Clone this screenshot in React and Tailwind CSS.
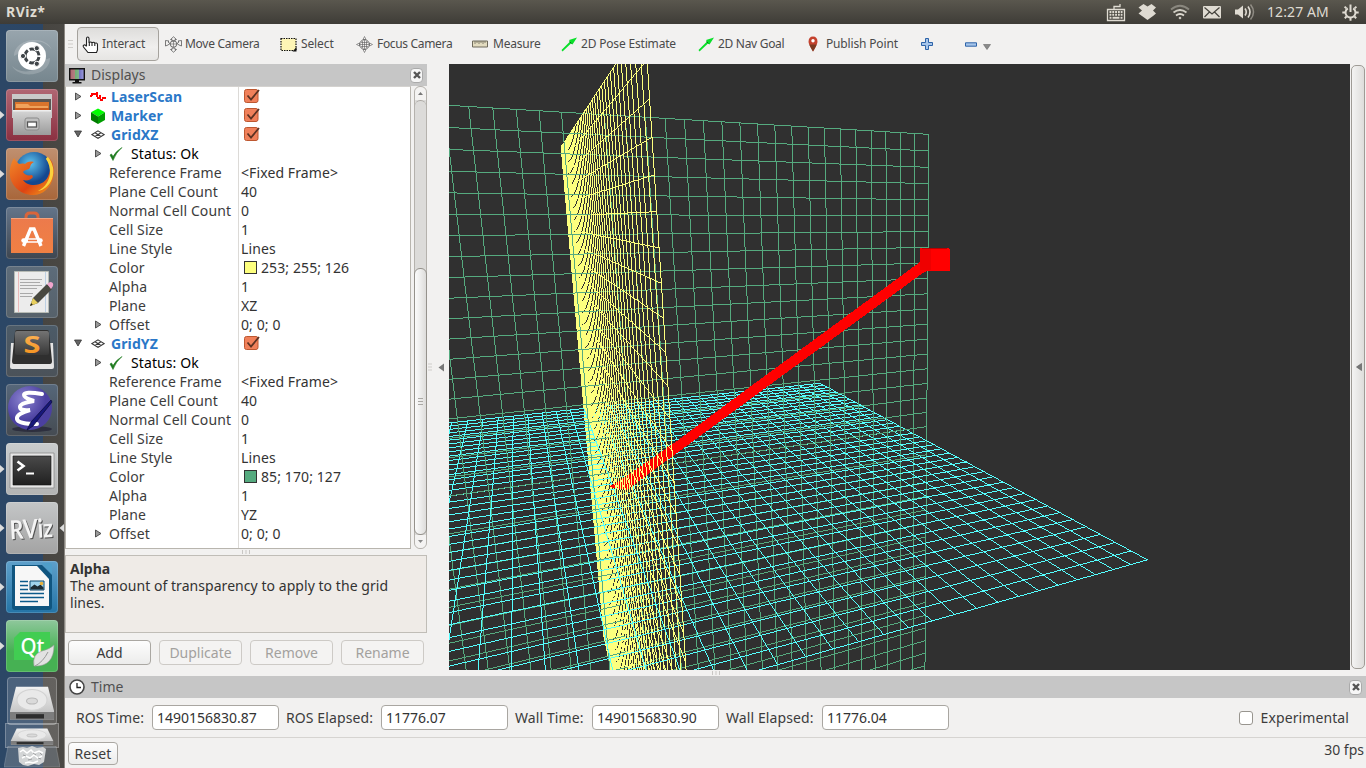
import React from "react";

/* ---------- 3D scene ---------- */
const OX = 449, OY = 64, W = 901, H = 606;
/* 3x4 camera matrix, row by row; the last entry is 1 */
const P = [0.105106, -0.955247, -0.069064, 0.001649, 0.284808, 0.146549, -0.850310, 0.008481, -0.425673, -0.220417, -0.096167];
const proj = (X, Y, Z) => {
  const x = X / 20, y = Y / 20, z = Z / 20;
  return [P[0] * x + P[1] * y + P[2] * z + P[3], P[4] * x + P[5] * y + P[6] * z + P[7], P[8] * x + P[9] * y + P[10] * z + 1];
};
const toPx = (h) => [613 + (400 * h[0]) / h[2] - OX, 486 + (400 * h[1]) / h[2] - OY];

function clip2(a, b) {
  let t0 = 0, t1 = 1; const dx = b[0] - a[0], dy = b[1] - a[1];
  for (const [p, q] of [[-dx, a[0]], [dx, W - a[0]], [-dy, a[1]], [dy, H - a[1]]]) {
    if (Math.abs(p) < 1e-9) { if (q < 0) return null; continue; }
    const r = q / p; if (p < 0) t0 = Math.max(t0, r); else t1 = Math.min(t1, r);
  }
  if (t0 >= t1) return null;
  return [[a[0] + dx * t0, a[1] + dy * t0], [a[0] + dx * t1, a[1] + dy * t1]];
}
/* one world-space line as runs of whole pixels, without antialiasing */
function seg(A, B) {
  let a = proj(...A), b = proj(...B);
  const E = 0.02;
  if (a[2] < E && b[2] < E) return "";
  const mix = (t) => a.map((v, i) => v + (b[i] - v) * t);
  if (a[2] < E) a = mix((E - a[2]) / (b[2] - a[2])); else if (b[2] < E) b = mix((E - a[2]) / (b[2] - a[2]));
  const c = clip2(toPx(a), toPx(b)); if (!c) return "";
  let [[x0, y0], [x1, y1]] = c, d = "";
  const steep = Math.abs(y1 - y0) > Math.abs(x1 - x0);
  if (steep) [x0, y0, x1, y1] = [y0, x0, y1, x1];
  if (x0 > x1) [x0, y0, x1, y1] = [x1, y1, x0, y0];
  const m = (y1 - y0) / (x1 - x0 || 1), e = Math.floor(x1);
  let s = Math.floor(x0), cur = Math.floor(y0);
  for (let i = s; i <= e + 1; i++) {
    const t = Math.min(Math.max(i + 0.5, x0), x1), yy = Math.floor(y0 + m * (t - x0));
    if (yy !== cur || i === e + 1) { if (i > s) d += steep ? `M${cur} ${s}h1v${i - s}h-1z` : `M${s} ${cur}h${i - s}v1h${s - i}z`; s = i; cur = yy; }
  }
  return d;
}
const HALF = [[-20, 0], [0, 20]];
function grid(make, su, sv) {
  const [u0, u1] = HALF[su], [v0, v1] = HALF[sv]; let d = "";
  for (let i = u0; i <= u1; i++) d += seg(make(i, v0), make(i, v1));
  for (let j = v0; j <= v1; j++) d += seg(make(u0, j), make(u1, j));
  return d;
}
const cy = (x, y) => [x, y, 0], ye = (x, z) => [x, 0, z], gr = (y, z) => [0, y, z];
const G = "#55aa7f", C = "#55ffff", Y = "#fdff7e";
/* grid quadrants from back to front; the arrow lies between the two lists */
const BACK = [
  [C, grid(cy, 0, 0)], [Y, grid(ye, 0, 0)], [Y, grid(ye, 0, 1)], [C, grid(cy, 0, 1)],
  [G, grid(gr, 0, 0)], [G, grid(gr, 0, 1)], [G, grid(gr, 1, 0)], [G, grid(gr, 1, 1)], [C, grid(cy, 1, 0)],
];
const FRONT = [[Y, grid(ye, 1, 0)], [Y, grid(ye, 1, 1)], [C, grid(cy, 1, 1)]];

function Scene() {
  return (
    <svg width={W} height={H} viewBox={`0 0 ${W} ${H}`} shapeRendering="crispEdges" className="block bg-[#303030]">
      {BACK.map(([f, d], i) => <path key={i} d={d} fill={f} />)}
      <path d="M162 422L176 413L230 375.500L300 323.500L471 198L489 200L471 211L300 336L230 387.500L178 426L165 424Z" fill="#ff0000" />
      <path d="M471 184h29v1h1v22h-30z" fill="#ff0000" />
      <path d="M471 184h11v22h-11z" fill="#ef0000" />
      <path d="M473 184h25v1h-25z" fill="#b80000" />
      {FRONT.map(([f, d], i) => <path key={i} d={d} fill={f} />)}
      <path d="M161 422.500l4-3v5z" fill="#ff0000" />
    </svg>
  );
}

/* ---------- launcher ---------- */
const Ubuntu = () => (
  <svg viewBox="0 0 52 52" className="size-full">
    <path d="M8 26C8 8 40 4 46 20C38 8 22 8 12 24M44 28c0 18-30 22-38 8c8 8 24 8 32-6" fill="#fff" opacity=".18" />
    <circle cx="26" cy="26" r="14" fill="#fff" />
    <circle cx="26" cy="26" r="7" fill="none" stroke="#3f4448" strokeWidth="3" strokeDasharray="12.660 2" strokeDashoffset="-1" />
    <g fill="#3f4448" stroke="#fff" strokeWidth="1"><circle cx="17" cy="26" r="2.600" /><circle cx="30.800" cy="18.200" r="2.600" /><circle cx="30.800" cy="33.800" r="2.600" /></g>
  </svg>
);
const Files = () => (
  <svg viewBox="0 0 52 52" className="size-full">
    <defs><linearGradient id="cab" x2="0" y2="1"><stop stopColor="#d6d6d6" /><stop offset="1" stopColor="#9b9b9b" /></linearGradient></defs>
    <path d="M6 5h40v24H6z" fill="#c9c9c9" /><path d="M7 10h38v12H7z" fill="#5a5553" />
    <path d="M9 13h34v9H9z" fill="#d9742c" /><path d="M10 15h12l2 2h18v5H10z" fill="#f0a35c" /><path d="M9 19h34v3H9z" fill="#c75a1c" />
    <path d="M7 21h38v25H7z" fill="url(#cab)" /><path d="M7 21h38v1.500H7z" fill="#eee" />
    <rect x="19" y="29" width="14" height="12" rx="2" fill="#bfbfbf" stroke="#8b8b8b" /><rect x="21.500" y="33" width="9" height="5" fill="#fff" stroke="#555" strokeWidth="1.300" />
  </svg>
);
const Firefox = () => (
  <svg viewBox="0 0 52 52" className="size-full">
    <defs>
      <radialGradient id="glb" cx=".4" cy=".3"><stop stopColor="#5cc3ee" /><stop offset="1" stopColor="#14478f" /></radialGradient>
      <linearGradient id="fox" x2="1" y2="1"><stop stopColor="#f28a2a" /><stop offset=".6" stopColor="#dd4413" /><stop offset="1" stopColor="#f4a51f" /></linearGradient>
    </defs>
    <circle cx="28" cy="23" r="19" fill="url(#glb)" />
    <path d="M8 10c-6 10-6 22 2 30s22 10 30 2c7-6 9-16 7-25c-1-4-3-6-5-8c3 7 3 12 1 17c-2 7-8 11-15 11c-5 0-9-2-11-5c4 1 8 0 10-3l-1-2c-4 1-7 0-9-3c1-2 4-2 6-3c2-2 0-4 5-7c-5-1-7 0-9 2c-3-1-4 0-6 0c-3-3-4-4-5-6z" fill="url(#fox)" />
    <path d="M42 9c5 6 7 14 4 22c-3 7-8 11-14 12c8-4 11-11 12-17c0-6-1-11-4-15c0-1 1-2 2-2z" fill="#fbd23c" />
  </svg>
);
const Software = () => (
  <svg viewBox="0 0 52 52" className="size-full">
    <defs><linearGradient id="bag" x2="0" y2="1"><stop stopColor="#ec7a4c" /><stop offset="1" stopColor="#f08043" /></linearGradient></defs>
    <path d="M20 17V10q0-4 4-4h4q4 0 4 4v7" fill="none" stroke="#d8653b" strokeWidth="3" />
    <path d="M5 11h42v35H5z" fill="url(#bag)" /><path d="M5 11h42v1H5z" fill="#f5a27c" />
    <path d="M17.500 39l7-17h3.500l7 17" fill="none" stroke="#fff" strokeWidth="3.400" /><path d="M17.500 33.500h17" stroke="#fff" strokeWidth="4.500" strokeLinecap="round" /><path d="M22 33.500h9" stroke="#ef7a45" strokeWidth="1.500" />
  </svg>
);
const Gedit = () => (
  <svg viewBox="0 0 52 52" className="size-full">
    <path d="M8.500 5.500h34v41h-34z" fill="#ececec" stroke="#b7bbb5" />
    <path d="M12.500 6v40" stroke="#e7a3a3" strokeWidth=".7" /><path d="M39.500 6v40" stroke="#a9c4e0" strokeWidth=".7" />
    <path d="M14 13.500h22M14 16.500h20M14 19.500h22M14 22.500h17M14 27.500h13M14 30.500h12" stroke="#a9a9a9" strokeWidth="1.200" />
    <path d="M24 40l3-8l14-14l5 5l-14 14z" fill="#484840" /><path d="M24 40l3-8l5 5z" fill="#e8cf5d" /><path d="M41 18l3-2q4 0 3 4l-2 3z" fill="#f0a5cd" /><path d="M24 40l1.200-3l1.600 1.800z" fill="#222" />
  </svg>
);
const Sublime = () => (
  <svg viewBox="0 0 52 52" className="size-full">
    <defs><linearGradient id="key" x2="0" y2="1"><stop stopColor="#737373" /><stop offset="1" stopColor="#373737" /></linearGradient><linearGradient id="sub" x2="0" y2="1"><stop stopColor="#ffbb63" /><stop offset="1" stopColor="#f28a12" /></linearGradient></defs>
    <path d="M5 18l-1 24q0 2 2 2h40q2 0 2-2l-1-24z" fill="#e4e4e4" /><path d="M6 36l2-20 1-9q0-2 2-2h30q2 0 2 2l1 9 2 20q0 3-2 3H8q-2 0-2-3z" fill="#2f2f2f" />
    <path d="M9 28V8q0-2 2-2h30q2 0 2 2v20q0 2-2 2H11q-2 0-2-2z" fill="url(#key)" />
    <text x="17.500" y="28" textLength="17" lengthAdjust="spacingAndGlyphs" fontSize="23" fontWeight="700" fill="url(#sub)">S</text>
  </svg>
);
const Emacs = () => (
  <svg viewBox="0 0 52 52" className="size-full">
    <defs><radialGradient id="em" cx=".35" cy=".3"><stop stopColor="#8b83cf" /><stop offset="1" stopColor="#4b40a0" /></radialGradient></defs>
    <ellipse cx="26" cy="45" rx="20" ry="3" fill="#1c1a2e" opacity=".6" /><circle cx="24" cy="24" r="22" fill="url(#em)" />
    <path d="M36 10q-18-3-18 1q0 3 10 6q-14 2-14 6q0 4 10 3q-14 4-13 9q1 5 20 5" fill="none" stroke="#fff" strokeWidth="4" strokeLinecap="round" />
    <path d="M21 46l4-8l20-22l1 2l-19 24z" fill="#17177a" stroke="#0b0b40" strokeWidth=".8" />
  </svg>
);
const Term = () => (
  <svg viewBox="0 0 52 52" className="size-full">
    <defs><linearGradient id="tm" x2="0" y2="1"><stop stopColor="#4a4a4a" /><stop offset="1" stopColor="#202020" /></linearGradient></defs>
    <path d="M4 10h44v35H4z" fill="#e6e6e6" stroke="#8a8a8a" strokeWidth=".8" /><path d="M7 13h38v29H7z" fill="url(#tm)" stroke="#111" strokeWidth=".6" />
    <path d="M11.500 18.500l6 4.500l-6 4.500" fill="none" stroke="#fff" strokeWidth="2.600" /><path d="M20 30.500h8" stroke="#fff" strokeWidth="2" />
  </svg>
);
const RVizLogo = () => (
  <svg viewBox="0 0 52 52" className="size-full font-['Lato','Noto_Sans',sans-serif] font-bold drop-shadow-[1px_1.5px_0.5px_rgba(70,70,70,0.9)]">
    <text x="4" y="36" fontSize="26" fill="#f4f4f4" textLength="43" lengthAdjust="spacingAndGlyphs" transform="rotate(-3 26 30)">RViz</text>
  </svg>
);
const Writer = () => (
  <svg viewBox="0 0 52 52" className="size-full">
    <path d="M6 4h30l10 10v32q0 3-3 3H9q-3 0-3-3z" fill="#10557f" /><path d="M36 2h7q3 0 3 3v8z" fill="#4f9fca" />
    <path d="M9 5h22l12 13v27H9z" fill="#f7f7f7" />
    <path d="M14 20.500h8M14 24.500h8M14 28.500h8M14 32.500h24M14 36.500h24M14 40.500h18" stroke="#0c5a8a" strokeWidth="1.700" />
    <path d="M24 20h14v9H24z" fill="#9fd3ec" stroke="#0c4b70" /><path d="M24.500 28.500v-2l4-3l3 2l3-2l3 3v2z" fill="#1d2c34" /><circle cx="35.500" cy="22.500" r="1.800" fill="#e9b13a" />
  </svg>
);
const Qt = () => (
  <svg viewBox="0 0 52 52" className="size-full">
    <path d="M14 12h30v20l-8 8H8V18z" fill="#41cd52" />
    <text x="14.500" y="34" fontSize="22" fontWeight="500" fill="#fff" textLength="24" lengthAdjust="spacingAndGlyphs">Qt</text>
    <path d="M28 46q-2-12 8-15q8-2 12-6q0 22-20 21z" fill="#e2e2e2" stroke="#9a9a9a" strokeWidth=".6" /><path d="M29 46q8-4 13-14" stroke="#999" fill="none" />
  </svg>
);
const Disk = () => (
  <svg viewBox="2 2 48 42" preserveAspectRatio="none" className="block size-full">
    <defs><linearGradient id="dk" x2="0" y2="1"><stop stopColor="#f2f2f2" /><stop offset="1" stopColor="#b9b9b9" /></linearGradient></defs>
    <path d="M10 10h32l6 22v8H4v-8z" fill="url(#dk)" /><path d="M4 33h44v6q0 1-1 1H5q-1 0-1-1z" fill="#7d7d7d" /><path d="M10 35h28v4H10z" fill="#2d2d2d" />
    <ellipse cx="26" cy="22" rx="15" ry="9.500" fill="#e9e9e9" stroke="#d2d2d2" /><ellipse cx="26" cy="23" rx="5.500" ry="2.800" fill="#dadada" stroke="#b8b8b8" />
  </svg>
);
const TILES = [
  [Ubuntu, "bg-[linear-gradient(180deg,#98a5ad,#76868e)]", 0], [Files, "bg-[linear-gradient(180deg,#b06673,#8b3041)]", 1],
  [Firefox, "bg-[linear-gradient(180deg,#c09070,#a8663a)]", 1], [Software, "bg-[linear-gradient(180deg,#64758a,#3e4650)]", 0],
  [Gedit, "bg-[linear-gradient(180deg,#5d6c7a,#56616a)]", 0], [Sublime, "bg-[linear-gradient(180deg,#4c5b68,#4b5259)]", 0],
  [Emacs, "bg-[linear-gradient(180deg,#56677a,#454b52)]", 0], [Term, "bg-[linear-gradient(180deg,#c9cccd,#b2b3b3)]", 1],
  [RVizLogo, "bg-[linear-gradient(180deg,#c4c6c7,#a3a3a3)]", 2], [Writer, "bg-[linear-gradient(180deg,#5ea0cb,#2474a6)]", 1],
  [Qt, "bg-[linear-gradient(180deg,#8fc79c,#46b153_60%)]", 1],
];
function Launcher() {
  return (
    <aside className="relative flex w-[65px] shrink-0 flex-col overflow-hidden border-r border-[#8b8782] bg-[linear-gradient(90deg,#2c4766_0,#2c4665_43px,#474541_43px,#4a4844_64px)] pt-[6px]">
      {TILES.map(([Icon, bg, arrows], i) => (
        <div key={i} className="mb-[7px] flex h-[52px] shrink-0 items-center">
          <svg width="6" height="10" className="shrink-0">{arrows > 0 && <path d="M0 1l4.500 4l-4.500 4z" fill="#dcdcdc" />}</svg>
          <div className={`size-[52px] shrink-0 overflow-hidden rounded-[4px] shadow-[inset_0_0_0_1px_rgba(255,255,255,0.16)] ${bg}`}><Icon /></div>
          <svg width="7" height="10" className="shrink-0">{arrows === 2 && <path d="M6 1l-4.500 4l4.500 4z" fill="#dcdcdc" />}</svg>
        </div>
      ))}
      <div className="mx-auto -mt-[2px] h-[48px] w-[50px] shrink-0 rounded-[4px] border border-white/25 bg-white/15"><Disk /></div>
      <div className="mx-auto -mt-[2px] h-[25px] w-[54px] shrink-0 border border-white/25 bg-white/15 px-[3px]"><Disk /></div>
      <svg viewBox="0 0 56 22" className="mx-auto -mt-[2px] h-[22px] w-[56px] shrink-0">
        <path d="M4 0h48l4 21H0z" fill="#7c8792" opacity=".5" stroke="#fff" strokeOpacity=".4" />
        <path d="M14 2l5-1l4 1l5-2l5 2l6-1l3 2l-2 13l-5 3l-5-1l-6 2l-5-1l-4-3z" fill="#d3d5d6" /><path d="M16 6l3-2l4 3l4-3l3 3l5-2l4 2M18 12l4-2l4 2l4-3l4 3l4-2M21 17l4-1l4 1l5-2" stroke="#fff" fill="none" strokeWidth="1.500" /><path d="M19 9l3 1M29 7l3 2M24 14l4-1M34 12l3 1M36 7l2 2" stroke="#9a9c9e" fill="none" />
      </svg>
    </aside>
  );
}

/* ---------- top bar ---------- */
function TopBar() {
  return (
    <header className="flex h-6 shrink-0 items-center bg-[linear-gradient(180deg,#5a574e,#3e3c37)] pl-[6px] pr-[7px] text-[#dfdbd2]">
      <span className="-mt-[2px] text-[14px] font-bold tracking-[0.5px]">RViz*</span>
      <div className="ml-auto flex items-center">
        <svg width="20" height="20" viewBox="0 0 20 20" className="mr-[12px]"><path d="M1.500 7.500h17v11h-17zM8 7V4.500H14V2" fill="none" stroke="#dfdbd2" strokeWidth="1.300" /><path d="M3.500 10h13M3.500 12.800h13" stroke="#dfdbd2" strokeWidth="1.900" strokeDasharray="1.900 .9" /><path d="M3.500 15.700h2M6.500 15.700h7M14.500 15.700h2" stroke="#dfdbd2" strokeWidth="1.900" /></svg>
        <svg width="19" height="18" viewBox="0 0 19 18" className="mr-[13px]"><path d="M5.500 1L9.500 3.500L13.500 1L18 4.500L15 7.500L18 10.500L15 13L9.500 17L4 13L.5 10.500L4 7.500L.5 4.500z" fill="#dfdbd2" /></svg>
        <svg width="20" height="16" viewBox="0 0 20 16" className="mr-[13px]" fill="none" stroke="#dfdbd2" strokeWidth="1.800"><path d="M1 5.500q9-7.500 18 0" opacity=".4" /><path d="M3.500 8.500q6.500-5 13 0" opacity=".9" /><path d="M6 11.500q4-3 8 0" /><circle cx="10" cy="14" r="1" fill="#dfdbd2" strokeWidth=".5" /></svg>
        <svg width="18" height="13" viewBox="0 0 18 13" className="mr-[14px]"><rect width="18" height="12.500" rx="1" fill="#dfdbd2" /><path d="M1.500 1.500L9 8l7.500-6.500M1.500 11l5-5M16.500 11l-5-5" stroke="#45433d" strokeWidth="1.200" fill="none" /></svg>
        <svg width="20" height="18" viewBox="0 0 20 18" className="mr-[12px]"><path d="M0 6.500h3l5-4v13l-5-4H0z" fill="#dfdbd2" /><path d="M10 5.500q2.500 3.500 0 7M13 3.500q4 5.500 0 11" fill="none" stroke="#dfdbd2" strokeWidth="1.600" /><path d="M15.500 1.500q6 7.500 0 15" fill="none" stroke="#dfdbd2" strokeWidth="1.500" opacity=".45" /></svg>
        <span className="-mt-px mr-[13px] w-[62px] whitespace-nowrap text-[14px] tracking-[0.1px]">12:27 AM</span>
        <svg width="17" height="17" viewBox="0 0 17 17" fill="none" stroke="#dfdbd2"><path d="M5.800 4.300a5 5 0 1 0 5.400 0" strokeWidth="2" /><path d="M8.500 .5v7.500" strokeWidth="2" /><path d="M2.600 2.600l1.800 1.800M14.400 2.600l-1.800 1.800M.3 8.500h2.700M14 8.500h2.700M2.800 14.200l1.700-1.700M14.200 14.200l-1.700-1.700M8.500 16.800V14" strokeWidth="2" /></svg>
      </div>
    </header>
  );
}

/* ---------- toolbar ---------- */
const MoveIcon = ({ focus }) => (
  <svg width="17" height="17" viewBox="0 0 17 17" fill="none" stroke="#5c5c5c" strokeWidth=".9">
    {focus ? <><circle cx="8.500" cy="8.500" r="4.800" /><path d="M8.500.5l1.500 3h-3zM8.500 16.500l1.500-3h-3zM.5 8.500l3-1.500v3zM16.500 8.500l-3-1.500v3zM8.500 4v9M4 8.500h9M6.500 5v7M10.500 5v7M5 6.500h7M5 10.500h7" strokeWidth=".6" /></>
      : <><path d="M8.500 .8l3 2.700h-1.500v1.500h-3V3.500h-1.500zM8.500 16.200l3-2.700h-1.500v-1.500h-3v1.500h-1.500zM.5 4.500l3.500.5l-1 1l2 1.500l-2 1.500l-2.500 1zM16.500 4.500l-3.500.5l1 1l-2 1.500l2 1.500l2.500 1z" strokeWidth=".8" /><circle cx="8.500" cy="8" r="3.300" /><path d="M5.500 8h6M8.500 5v6" strokeWidth=".6" /></>}
  </svg>
);
const Arrow = () => <svg width="16" height="16" viewBox="0 0 16 16"><path d="M.5 14l8.500-8.500l-1-1.500l8-2.500l-4.500 7l-1.500-1L1.500 15.500z" fill="#0ae02a" /><path d="M8.500 5.500l2 2" stroke="#06701a" /></svg>;
const Plus = () => <svg width="12" height="12" viewBox="0 0 12 12"><path d="M4.500.5h3v4h4v3h-4v4h-3v-4h-4v-3h4z" fill="#a6c5ea" stroke="#2d63a8" /></svg>;
function Tool({ icon, children, gap = "ml-[3px]", track = "tracking-[-0.12px]" }) {
  return <div className="flex items-center">{icon}<span className={`${gap} ${track} whitespace-nowrap text-[12px]`}>{children}</span></div>;
}
function Toolbar() {
  return (
    <div className="flex h-10 shrink-0 items-center text-[#4a4a4a]">
      <svg width="8" height="10" className="ml-[3px]"><path d="M0 1.500h5M0 5h5M0 8.500h5" stroke="#cfcdca" strokeWidth="1.200" /></svg>
      <div className="ml-px flex h-[34px] w-[82px] items-center rounded-[4px] border border-[#a5a29d] bg-[linear-gradient(180deg,#dedddb,#f0efee_60%,#e6e5e3)] pl-[4px]">
        <Tool gap="ml-[3px]" icon={<svg width="17" height="17" viewBox="0 0 17 17"><path d="M4.500 10V2.500q0-1.500 1.200-1.500t1.300 1.500V7q.5-1 1.500-1t1.500 1q.5-.7 1.500-.7t1.300 1q.5-.5 1.500-.3q1.200.3 1.200 1.500V14l-1 2.500H6L1.500 11q-.8-1.500.5-2t2.500 1.500M7.300 7v3M10 7.500V10M12.800 7.500V10" fill="#fff" stroke="#222" strokeWidth="1.100" /></svg>}>Interact</Tool>
      </div>
      <div className="ml-[6px] w-[115px]"><Tool track="tracking-[-0.28px]" icon={<MoveIcon />}>Move Camera</Tool></div>
      <div className="w-[76px]"><Tool gap="ml-[4px]" icon={<svg width="17" height="15" viewBox="0 0 17 15"><path d="M1 1.500h15v12H1z" fill="#fdf5b5" stroke="#111" strokeDasharray="1.500 1" strokeWidth="1.200" /><path d="M16.500 10v4.500h-4z" fill="#111" /></svg>}>Select</Tool></div>
      <div className="w-[116px]"><Tool gap="ml-[4px]" track="tracking-[-0.33px]" icon={<MoveIcon focus />}>Focus Camera</Tool></div>
      <div className="w-[89px]"><Tool gap="ml-[5px]" track="tracking-[-0.2px]" icon={<svg width="16" height="8" viewBox="0 0 16 8"><path d="M.5 1h15v6H.5z" fill="#e3dcc0" stroke="#6f6a5c" /><path d="M3 1v3M5 1v2M7 1v3M9 1v2M11 1v3M13 1v2" stroke="#6f6a5c" strokeWidth=".8" /></svg>}>Measure</Tool></div>
      <div className="w-[137px]"><Tool gap="ml-[4px]" track="tracking-[-0.18px]" icon={<Arrow />}>2D Pose Estimate</Tool></div>
      <div className="w-[110px]"><Tool gap="ml-[4px]" track="tracking-[-0.3px]" icon={<Arrow />}>2D Nav Goal</Tool></div>
      <div className="w-[113px]"><Tool gap="ml-[8px]" track="tracking-[-0.16px]" icon={<svg width="10" height="16" viewBox="0 0 10 16"><path d="M5 15.500Q1 9 .5 6q0-5.500 4.500-5.500T9.500 6Q9 9 5 15.500z" fill="#c4422e" /><path d="M5 15.500Q2 10.500 1.300 8.500h7.400Q8 10.500 5 15.500z" fill="#7c3a22" /><circle cx="5" cy="4.700" r="1.700" fill="#fff" /></svg>}>Publish Point</Tool></div>
      <Plus />
      <svg width="12" height="5" viewBox="0 0 12 5" className="ml-[32px]"><path d="M.5.8h11v3.400H.5z" fill="#a6c5ea" stroke="#2d63a8" /></svg>
      <svg width="8" height="6" className="ml-[6px] mt-[6px]"><path d="M.5.500h7l-3.500 5z" fill="#8a8a8a" stroke="#666" strokeWidth=".6" /></svg>
    </div>
  );
}

/* ---------- displays dock ---------- */
const Tri = ({ open }) => <svg width="8" height="9" viewBox="0 0 8 9">{open ? <path d="M.5 1h7l-3.500 6z" fill="#666" stroke="#333" strokeWidth=".8" /> : <path d="M1.500 1l5.500 3.500l-5.500 3.500z" fill="#999" stroke="#444" strokeWidth=".9" />}</svg>;
const Check = () => (
  <svg width="17" height="16" viewBox="0 0 17 16"><rect x="1.500" y="1.500" width="13.500" height="13" rx="2" fill="#f0805a" stroke="#bd5730" /><path d="M4.500 7.500l3.500 4l8-9.500" fill="none" stroke="#5c3223" strokeWidth="1.800" /></svg>
);
const GridIcon = () => <svg width="14" height="10" viewBox="0 0 14 10" fill="none" stroke="#3a3a3a" strokeWidth="1.100"><path d="M7 .9L13 4.600L7 8.300L1 4.600zM4 2.800l6 3.700M10 2.800L4 6.500" /></svg>;
const props = (c, rgb, plane) => [
  { s: 1 }, { n: "Reference Frame", v: "<Fixed Frame>" }, { n: "Plane Cell Count", v: "40" }, { n: "Normal Cell Count", v: "0" },
  { n: "Cell Size", v: "1" }, { n: "Line Style", v: "Lines" }, { n: "Color", v: rgb, c }, { n: "Alpha", v: "1" }, { n: "Plane", v: plane }, { n: "Offset", v: "0; 0; 0", t: 1 },
];
const ROWS = [
  { h: "LaserScan", i: <svg width="16" height="11" viewBox="0 0 16 11" shapeRendering="crispEdges"><path d="M0 6V4h1V2h5V1h2v5h1V4h1v0h1v4h1V6h4v2h-3v2h-3V8H7V6H6V4H3v1H2v1z" fill="#f00" /></svg> },
  { h: "Marker", i: <svg width="14" height="16" viewBox="0 0 14 16"><path d="M7 .5l7 3.800L7 8.500L0 4.300z" fill="#00ff00" /><path d="M0 4.300l7 4.200V16l-7-4z" fill="#007c00" /><path d="M14 4.300L7 8.500V16l7-4z" fill="#009e00" /></svg> },
  { h: "GridXZ", open: 1, i: <GridIcon /> }, ...props("bg-[#fdff7e]", "253; 255; 126", "XZ"),
  { h: "GridYZ", open: 1, i: <GridIcon /> }, ...props("bg-[#55aa7f]", "85; 170; 127", "YZ"),
];
function Row({ r }) {
  return (
    <div className="flex h-[19px] shrink-0 items-center whitespace-nowrap text-[14px] leading-[19px] tracking-[0.1px]">
      <div className="flex h-full w-[173px] shrink-0 items-center border-r border-[#dcdad7] text-[#3c3c3c]">
        {r.h ? <><span className="ml-[8px] w-[14px]"><Tri open={r.open} /></span><span className="flex w-[23px] justify-center pr-[4px]">{r.i}</span><b className="text-[#2a78c8]">{r.h}</b></>
          : <><span className="ml-[28px] w-[15px]">{(r.s || r.t) && <Tri />}</span>
            {r.s ? <><svg width="14" height="14" viewBox="0 0 14 14"><path d="M1 8l3 5.500Q7 5.500 13 .5Q7 4 4 9.500L2.500 7z" fill="#1d7a1d" stroke="#1d7a1d" strokeWidth=".6" /></svg><span className="ml-[8px] text-black">Status: Ok</span></> : <span>{r.n}</span>}</>}
      </div>
      <div className="flex items-center pl-[2px] text-[#333]">
        {r.h && <span className="-mt-px ml-[2px]"><Check /></span>}
        {r.c && <span className={`-mt-px ml-[3px] mr-[4px] size-[13px] border border-[#333] ${r.c}`} />}
        {r.v}
      </div>
    </div>
  );
}
const CloseBtn = () => (
  <span className="mr-px flex h-[15px] w-[13px] items-center justify-center rounded-[4px] border border-[#aaa] bg-[#f6f6f6]"><svg width="8" height="8" viewBox="0 0 8 8"><path d="M1 1l6 6M7 1L1 7" stroke="#555" strokeWidth="2.400" /></svg></span>
);
function Displays() {
  return (
    <section className="flex w-[362px] shrink-0 flex-col">
      <div className="flex h-[22px] shrink-0 items-center bg-[#c6c6c6] pl-[4px] pr-[3px] text-[14px] text-[#505050]">
        <svg width="16" height="16" viewBox="0 0 16 16" className="mt-px"><defs><linearGradient id="rgb"><stop stopColor="#b06070" /><stop offset=".33" stopColor="#b08080" /><stop offset=".36" stopColor="#70b070" /><stop offset=".63" stopColor="#80b090" /><stop offset=".66" stopColor="#7070c0" /><stop offset="1" stopColor="#a0a0e0" /></linearGradient></defs><path d="M.7.700h14.600v11H.7z" fill="url(#rgb)" stroke="#111" strokeWidth="1.400" /><path d="M6 12h4v2h2.500v1.500h-9V14H6z" fill="#111" /></svg>
        <span className="-mt-[2px] ml-[6px] grow">Displays</span><CloseBtn />
      </div>
      <div className="flex h-[463px] shrink-0 bg-[#f2f1f0]">
        <div className="flex w-[346px] flex-col overflow-hidden border-b border-l border-r border-t border-[#b8b5ae] border-t-[#d4d2cf] bg-white">
          {ROWS.map((r, i) => <Row key={i} r={r} />)}
          <div className="w-[173px] grow border-r border-[#dcdad7]" />
        </div>
        <div className="ml-[3px] flex w-[13px] flex-col rounded-[6px] border border-[#b5b2ad] bg-[#dcdbd9]">
          <div className="flex h-[13px] shrink-0 items-center justify-center rounded-t-[6px] bg-[#f4f3f2]"><svg width="5" height="3"><path d="M0 3l2.500-3L5 3z" fill="#777" /></svg></div>
          <div className="h-[168px] shrink-0 rounded-t-[6px] border-t border-[#a9a6a1]" />
          <div className="-mx-px flex grow items-center justify-center rounded-[6px] border border-[#95928c] bg-[linear-gradient(90deg,#fbfbfb,#ededec,#dddcda)]"><svg width="5" height="9"><path d="M0 1.500h5M0 4.500h5M0 7.500h5" stroke="#aaa8a4" /></svg></div>
          <div className="flex h-[13px] shrink-0 items-center justify-center rounded-b-[6px] bg-[#f4f3f2]"><svg width="5" height="3"><path d="M0 0h5L2.500 3z" fill="#888" /></svg></div>
        </div>
      </div>
      <div className="flex h-[6px] shrink-0 items-center justify-center"><svg width="8" height="4"><path d="M.5 0v4M4 0v4M7.500 0v4" stroke="#c9c7c4" /></svg></div>
      <div className="h-[78px] shrink-0 border border-[#c0bdb7] bg-[#efebe7] px-[4px] pt-[4px] text-[14px] leading-[17px] text-[#333]"><b>Alpha</b><div className="w-[330px] tracking-[0.05px]">The amount of transparency to apply to the grid lines.</div></div>
      <div className="flex gap-[8px] pl-[3px] pt-[7px]">
        {["Add", "Duplicate", "Remove", "Rename"].map((b, i) => (
          <button key={b} className={`h-[25px] w-[83px] rounded-[4px] border text-[14px] leading-[22px] ${i ? "border-[#cdcac6] bg-[#f4f3f2] text-[#a3a19e]" : "border-[#aaa7a2] bg-[linear-gradient(180deg,#fdfdfd,#ececeb)] text-[#3c3c3c]"}`}>{b}</button>
        ))}
      </div>
    </section>
  );
}

const Field = ({ label, lw, v }) => (
  <div className="flex items-center"><span className={`${lw} shrink-0 whitespace-nowrap tracking-[0.1px]`}>{label}</span><span className="flex h-[25px] w-[127px] items-center rounded-[4px] border border-[#a9a6a1] bg-white pl-[4px] text-[#333]">{v}</span></div>
);
const Grip = () => <svg width="4" height="8"><path d="M0 1h4M0 4h4M0 7h4" stroke="#cfcdca" /></svg>;

export default function App() {
  return (
    <div className="flex h-[768px] w-[1366px] flex-col overflow-hidden bg-[#f2f1f0] font-['Noto_Sans',sans-serif] text-[#3c3c3c]">
      <TopBar />
      <div className="flex min-h-0 grow">
        <Launcher />
        <main className="flex min-w-0 grow flex-col">
          <Toolbar />
          <div className="flex h-[606px] shrink-0">
            <Displays />
            <div className="flex w-[22px] shrink-0 items-center gap-[5px] pl-px"><Grip /><svg width="7" height="9" className="ml-px"><path d="M6 .5v8L.5 4.500z" fill="#777" /></svg></div>
            <Scene />
            <div className="ml-px mt-px flex h-[604px] w-[14px] items-center justify-end rounded-[5px] border border-[#9f9c96] bg-[linear-gradient(90deg,#f4f4f3,#dedddb)] pr-[2px]"><svg width="6" height="8"><path d="M5.500 .5v7L.5 4z" fill="#777" stroke="#555" strokeWidth=".6" /></svg></div>
          </div>
          <div className="flex h-[6px] shrink-0 items-center justify-center"><svg width="8" height="4"><path d="M.5 0v4M4 0v4M7.500 0v4" stroke="#c9c7c4" /></svg></div>
          <div className="flex h-[22px] shrink-0 items-center bg-[#c6c6c6] pl-[4px] pr-[3px] text-[14px] text-[#505050]">
            <svg width="16" height="16" viewBox="0 0 16 16"><circle cx="8" cy="8" r="7" fill="#fff" stroke="#444" strokeWidth="1.600" /><path d="M8 4v4.500h4" fill="none" stroke="#222" strokeWidth="1.300" /></svg>
            <span className="-mt-[2px] ml-[6px] grow">Time</span><CloseBtn />
          </div>
          <div className="flex h-[40px] shrink-0 items-center gap-[7px] border-b border-[#d6d4d1] pl-[11px] pr-[17px] text-[14px]">
            <Field label="ROS Time:" lw="w-[76px]" v="1490156830.87" /><Field label="ROS Elapsed:" lw="w-[95px]" v="11776.07" />
            <Field label="Wall Time:" lw="w-[77px]" v="1490156830.90" /><Field label="Wall Elapsed:" lw="w-[96px]" v="11776.04" />
            <span className="ml-auto mr-px size-[14px] rounded-[3px] border border-[#98958f] bg-white" /><span className="tracking-[0.1px]">Experimental</span>
          </div>
          <div className="flex grow justify-between pl-[3px] pr-[2px] pt-[4px] text-[14px]">
            <button className="h-[23px] w-[50px] rounded-[4px] border border-[#aaa7a2] bg-[linear-gradient(180deg,#fdfdfd,#ececeb)] leading-[20px] tracking-[0.15px]">Reset</button><span className="leading-[16px]">30 fps</span>
          </div>
        </main>
      </div>
    </div>
  );
}
